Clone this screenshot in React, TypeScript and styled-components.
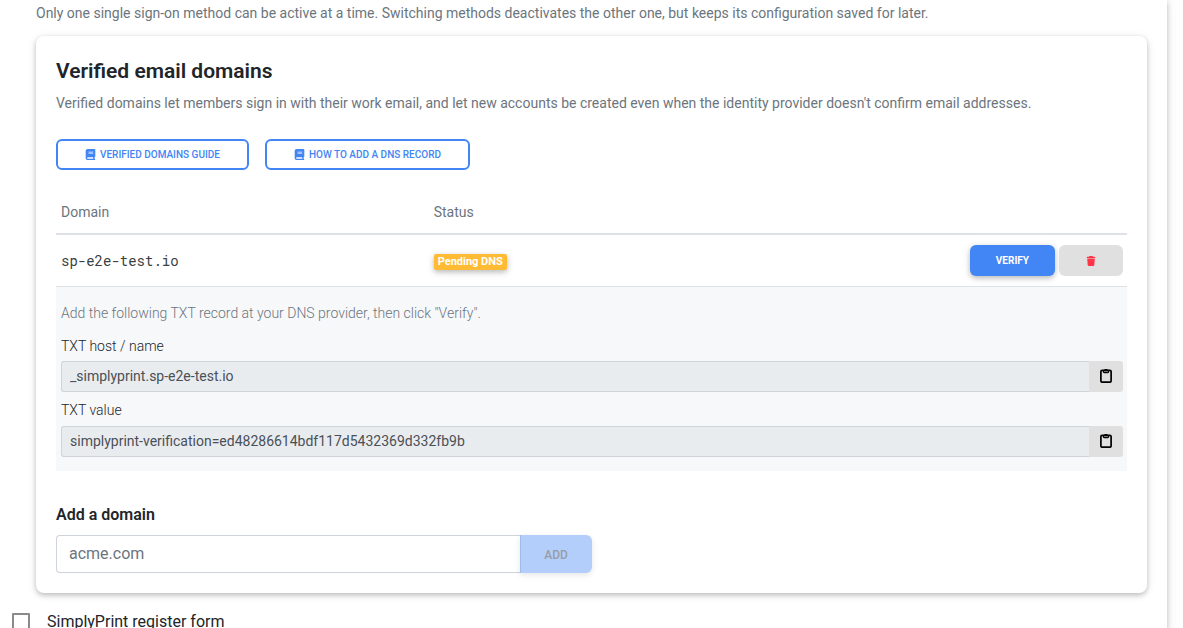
import React from 'react';
import styled, { createGlobalStyle } from 'styled-components';
import { FaBook, FaTrash } from 'react-icons/fa6';

const raised = '0 2px 5px 0 rgba(0, 0, 0, 0.2), 0 2px 10px 0 rgba(0, 0, 0, 0.1)';

const GlobalStyle = createGlobalStyle`
  *, *::before, *::after { box-sizing: border-box; }
  html { overflow: hidden; }
  body {
    margin: 0;
    background: #fefefe;
    color: #212529;
    font: 400 14px/21px Roboto, "Liberation Sans", sans-serif;
  }
  button, input { font-family: inherit; margin: 0; }
`;

const Page = styled.main`
  min-height: 100vh;
  margin-right: 16px;
  padding: 3px 20px 0 36px;
  background: #fff;
  box-shadow: ${raised};
`;

const Muted = styled.p`
  margin: 0;
  color: #6c757d;
`;

const Card = styled.section`
  margin-top: 12px;
  padding: 20px;
  border-radius: 8px;
  background: #fff;
  box-shadow: ${raised};
`;

const Title = styled.h2`
  margin: 0 0 7px;
  font-size: 21px;
  line-height: 30px;
  font-weight: 600;
`;

const Guides = styled.div`
  display: flex;
  gap: 16px;
  margin: 25px 0 20px;
`;

const GuideLink = styled.a`
  display: inline-flex;
  align-items: center;
  gap: 4px;
  height: 31px;
  padding: 0 27px;
  border: 2px solid #4285f4;
  border-radius: 6px;
  color: #4285f4;
  font-size: 10px;
  line-height: 15px;
  font-weight: 500;
  text-transform: uppercase;
  text-decoration: none;
`;

const DomainTable = styled.table`
  width: 100%;
  border-collapse: separate;
  border-spacing: 0;
  table-layout: fixed;
`;

const HeadCell = styled.th<{ $width?: string }>`
  width: ${(p) => p.$width ?? 'auto'};
  height: 45px;
  padding: 2px 5px 0;
  border-bottom: 2px solid #dee2e6;
  color: #6c757d;
  font-weight: 400;
  text-align: left;
`;

const Cell = styled.td`
  height: 52px;
  padding: 0 5px;
  border-bottom: 1px solid #dee2e6;
`;

const DetailCell = styled.td`
  padding: 16px 4px 14px 5px;
  background: #f7f8fa;
  font-weight: 300;
`;

const DomainName = styled.code`
  color: #3a3f44;
  font-family: "Roboto Mono", "Liberation Mono", monospace;
  font-size: 14px;
`;

const Badge = styled.span`
  display: block;
  width: fit-content;
  margin-top: 2px;
  padding: 2px 4px;
  border-radius: 2px;
  background: #ffbb33;
  box-shadow: ${raised};
  color: #fff;
  font-size: 11px;
  line-height: 12px;
  font-weight: 700;
`;

const Actions = styled.div`
  display: flex;
  justify-content: flex-end;
  gap: 4px;
  margin-right: -1px;
`;

const ActionButton = styled.button<{ $primary?: boolean }>`
  display: inline-flex;
  align-items: center;
  justify-content: center;
  min-width: 64px;
  height: 31px;
  padding: 0 26px;
  border: 0;
  border-radius: 6px;
  background: ${(p) => (p.$primary ? '#4285f4' : '#e0e0e0')};
  box-shadow: ${(p) => (p.$primary ? raised : 'none')};
  color: ${(p) => (p.$primary ? '#fff' : '#ff3547')};
  font-size: 10px;
  font-weight: 700;
  text-transform: uppercase;
`;

const FieldLabel = styled.label`
  display: block;
  margin-top: 12px;
  padding-bottom: 4px;
`;

const CopyField = styled.div`
  display: flex;
  height: 31px;
  & + ${FieldLabel} { margin-top: 8px; padding-bottom: 5px; }
`;

const RecordInput = styled.input`
  flex: 1;
  min-width: 0;
  padding: 0 8px 2px;
  border: 1px solid #ced4da;
  border-right: 0;
  border-radius: 3px 0 0 3px;
  background: #e9ecef;
  color: #495057;
  font-size: 14px;
`;

const CopyButton = styled.button`
  display: flex;
  align-items: center;
  justify-content: center;
  width: 34px;
  padding: 0 0 1px;
  border: 0;
  border-radius: 0 3px 3px 0;
  background: #e0e0e0;
  color: #000;
`;

const AddLabel = styled.label`
  display: block;
  margin: 32px 0 8px;
  font-size: 16px;
  line-height: 24px;
  font-weight: 600;
`;

const AddRow = styled.form`
  display: flex;
  width: 50%;
  height: 38px;
`;

const AddInput = styled.input`
  flex: 1;
  min-width: 0;
  padding: 0 12px 2px;
  border: 1px solid #ced4da;
  border-right: 0;
  border-radius: 4px 0 0 4px;
  background: #fff;
  font-size: 16px;
  &::placeholder { color: #6c757d; opacity: 1; }
`;

const AddButton = styled.button`
  width: 72px;
  padding: 2px 0 0;
  border: 0;
  border-left: 1px solid #9dbcec;
  border-radius: 0 6px 6px 0;
  background: #b3cefb;
  box-shadow: 0 2px 5px rgba(0, 0, 0, 0.06), 0 2px 10px rgba(0, 0, 0, 0.05);
  color: #989da6;
  font-size: 12px;
  font-weight: 500;
  text-transform: uppercase;
`;

const CheckLabel = styled.label`
  display: flex;
  align-items: center;
  gap: 17px;
  margin: 17px 0 0 -24px;
  font-size: 16px;
  line-height: 24px;
`;

const Checkbox = styled.input`
  appearance: none;
  width: 18px;
  height: 18px;
  border: 2px solid #8a8a8a;
  border-radius: 1px;
`;

const ClipboardIcon = () => (
  <svg width="12" height="14" viewBox="0 0 12 14" fill="none" stroke="currentColor" aria-hidden="true">
    <rect x="0.9" y="1.4" width="10.2" height="11.8" rx="1.2" strokeWidth="1.7" />
    <path d="M3.4 1.4v1.1c0 .6.4 1 1 1h3.2c.6 0 1-.4 1-1V1.4" strokeWidth="1.3" />
    <path d="M4.2 1.1C4.5.6 5.1.5 6 .5s1.500.1 1.800.6" strokeWidth="1" />
  </svg>
);

const records = [
  { id: 'txt-host', label: 'TXT host / name', value: '_simplyprint.sp-e2e-test.io' },
  { id: 'txt-value', label: 'TXT value', value: 'simplyprint-verification=ed48286614bdf117d5432369d332fb9b' },
];

export default function App() {
  return (
    <>
      <GlobalStyle />
      <Page>
        <Muted>
          Only one single sign-on method can be active at a time. Switching methods deactivates the
          other one, but keeps its configuration saved for later.
        </Muted>
        <Card>
          <Title>Verified email domains</Title>
          <Muted>
            Verified domains let members sign in with their work email, and let new accounts be
            created even when the identity provider doesn't confirm email addresses.
          </Muted>
          <Guides>
            <GuideLink href="#verified-domains"><FaBook size={11} />Verified domains guide</GuideLink>
            <GuideLink href="#dns-record"><FaBook size={11} />How to add a DNS record</GuideLink>
          </Guides>
          <DomainTable>
            <thead>
              <tr>
                <HeadCell $width="34.8%">Domain</HeadCell>
                <HeadCell>Status</HeadCell>
                <HeadCell $width="200px" aria-label="Actions" />
              </tr>
            </thead>
            <tbody>
              <tr>
                <Cell><DomainName>sp-e2e-test.io</DomainName></Cell>
                <Cell><Badge>Pending DNS</Badge></Cell>
                <Cell>
                  <Actions>
                    <ActionButton type="button" $primary>Verify</ActionButton>
                    <ActionButton type="button" aria-label="Delete domain"><FaTrash size={10} /></ActionButton>
                  </Actions>
                </Cell>
              </tr>
              <tr>
                <DetailCell colSpan={3}>
                  <Muted>Add the following TXT record at your DNS provider, then click "Verify".</Muted>
                  {records.map((r) => (
                    <React.Fragment key={r.id}>
                      <FieldLabel htmlFor={r.id}>{r.label}</FieldLabel>
                      <CopyField>
                        <RecordInput id={r.id} readOnly value={r.value} />
                        <CopyButton type="button" aria-label={`Copy ${r.label}`}><ClipboardIcon /></CopyButton>
                      </CopyField>
                    </React.Fragment>
                  ))}
                </DetailCell>
              </tr>
            </tbody>
          </DomainTable>
          <AddLabel htmlFor="new-domain">Add a domain</AddLabel>
          <AddRow>
            <AddInput id="new-domain" placeholder="acme.com" />
            <AddButton type="submit" disabled>Add</AddButton>
          </AddRow>
        </Card>
        <CheckLabel>
          <Checkbox type="checkbox" />
          SimplyPrint register form
        </CheckLabel>
      </Page>
    </>
  );
}
